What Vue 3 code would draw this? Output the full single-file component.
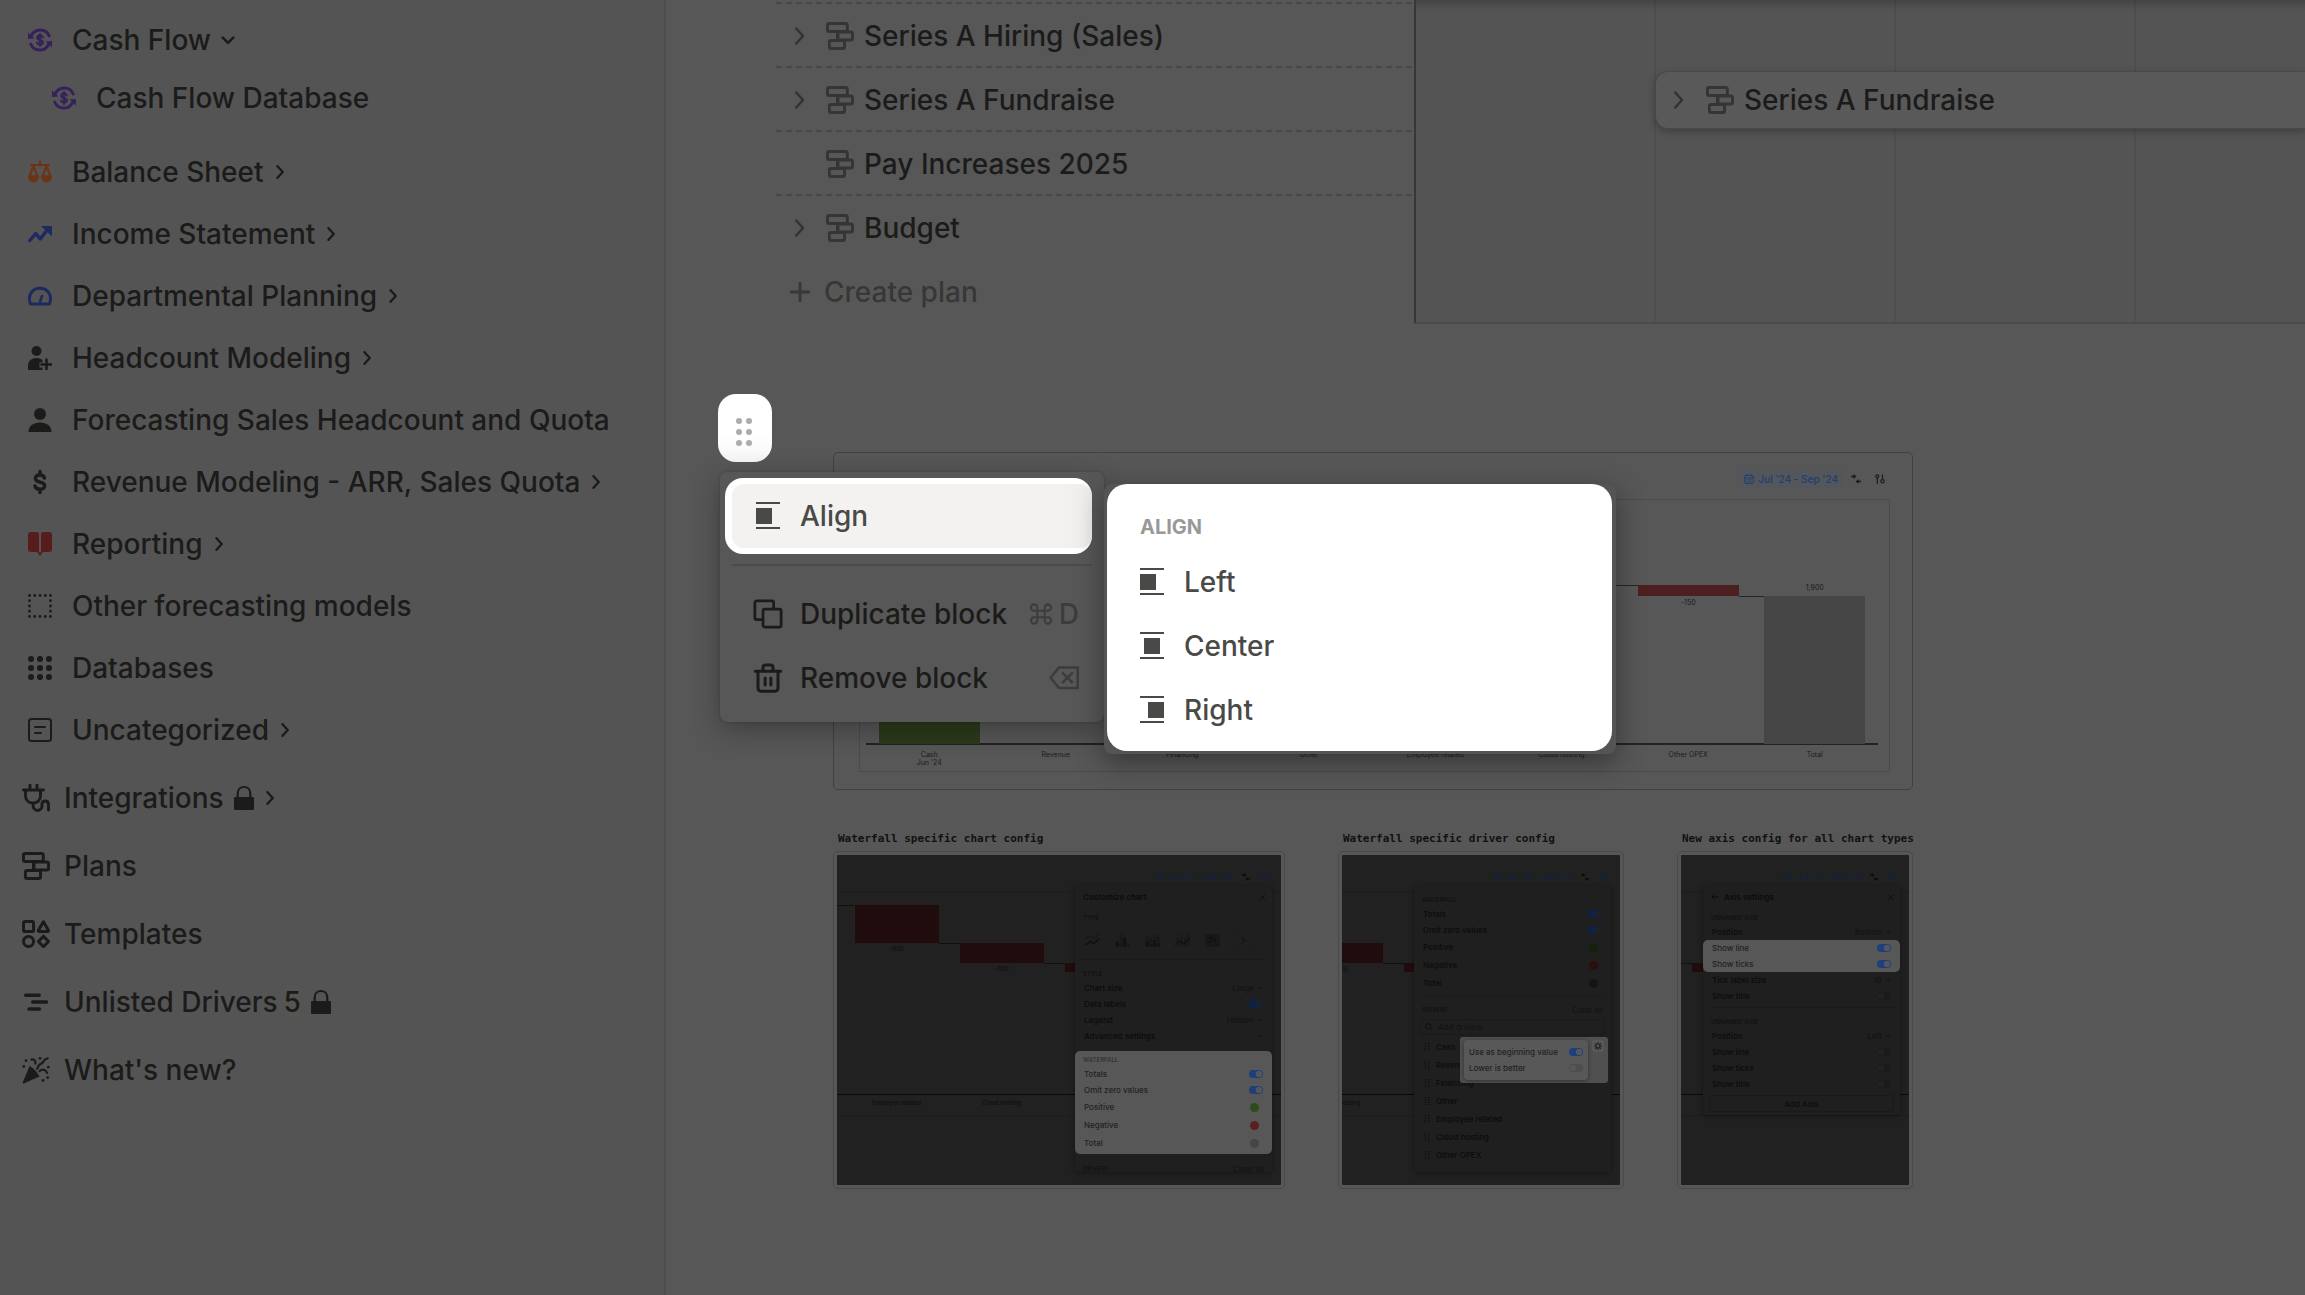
<script setup>
import { h } from 'vue'

const shapes = {
  cash: '<g fill="none" stroke="currentColor" stroke-width="2.900" stroke-linecap="round"><path d="M3 8.500A9.800 9.800 0 0 1 21.300 8"/><path d="M21 15.500A9.800 9.800 0 0 1 2.700 16"/><path d="M14.800 9.300C14.300 8 13.200 7.600 12 7.600c-1.600 0-2.700.8-2.700 2.100 0 3.200 5.500 1.400 5.500 4.600 0 1.300-1.200 2.100-2.800 2.100-1.400 0-2.500-.6-2.900-1.800M12 6v12" stroke-width="2.200"/></g><path fill="currentColor" d="M0 4.500v6.500l6.500-.5zM24 19.500v-6.500l-6.500.5z"/>',
  scale: '<g fill="none" stroke="currentColor" stroke-width="2.200" stroke-linejoin="round" stroke-linecap="round"><path d="M12 1.500v4M3 5h18M5.500 5.500l-4 11h8zM18.500 5.500l-4 11h8z"/></g><path fill="currentColor" d="M0 15.500h11c0 4-2 6.800-5.500 6.800S0 19.500 0 15.500zM13 15.500h11c0 4-2 6.800-5.500 6.800S13 19.500 13 15.500z"/>',
  trend: '<path fill="none" stroke="currentColor" stroke-width="3.400" stroke-linecap="round" stroke-linejoin="round" d="M1.800 18.500l6-7 4.400 5.500L20 7"/><path fill="currentColor" d="M13 4h10a1 1 0 0 1 1 1v9.500z"/>',
  gauge: '<path fill="none" stroke="currentColor" stroke-width="2.900" stroke-linejoin="round" d="M2.600 20A10.500 10.500 0 0 1 1.500 14.500C1.500 8.500 6 4.300 12 4.300s10.500 4.200 10.500 10.200c0 2-.3 3.900-1.100 5.500z"/><path d="M12 18l2-6" stroke="currentColor" stroke-width="2.600" stroke-linecap="round"/>',
  useradd: '<circle cx="8.500" cy="5" r="5" fill="currentColor"/><path fill="currentColor" d="M0 24v-4c0-5 3.500-8 8.500-8 2.500 0 4.500.8 6 2.200v2.300h-3v5h3V24z"/><path d="M18.500 13.500v10M13.500 18.500h10" stroke="currentColor" stroke-width="2.600" stroke-linecap="round"/>',
  user: '<circle cx="12" cy="6" r="6" fill="currentColor"/><path fill="currentColor" d="M.5 24c0-6 4.500-9.500 11.500-9.500S23.500 18 23.500 24z"/>',
  dollar: '<path fill="none" stroke="currentColor" stroke-width="3.400" stroke-linecap="round" d="M16.500 8C16 6 14.200 5 12 5c-2.800 0-4.600 1.300-4.600 3.500 0 5 9.300 2.300 9.300 7.200 0 2.200-2 3.600-4.700 3.600-2.500 0-4.400-1.200-5-3.300M12 1.500v3.500M12 19v3.500"/>',
  book: '<path fill="currentColor" d="M3 0h5.500C10 0 11 .8 11 2v17.500L12 21l1-1.500V2c0-1.200 1-2 2.500-2H21c2 0 3 1 3 3v14c0 2-1 3-3 3h-4c-2 0-3 .5-3.500 2L12 24l-1.500-2C10 20.500 9 20 7 20H3c-2 0-3-1-3-3V3c0-2 1-3 3-3z"/>',
  dotted: '<path fill="none" stroke="currentColor" stroke-width="2.800" stroke-linecap="round" stroke-dasharray=".1 5.150" d="M1.500 1.500h21v21h-21z"/>',
  grid: '<g fill="currentColor"><circle cx="3" cy="3" r="3"/><circle cx="12" cy="3" r="3"/><circle cx="21" cy="3" r="3"/><circle cx="3" cy="12" r="3"/><circle cx="12" cy="12" r="3"/><circle cx="21" cy="12" r="3"/><circle cx="3" cy="21" r="3"/><circle cx="12" cy="21" r="3"/><circle cx="21" cy="21" r="3"/></g>',
  doc: '<g fill="none" stroke="currentColor" stroke-width="2" stroke-linecap="round"><rect x="1" y="1" width="22" height="22" rx="2.500"/><path d="M7 9h10M7 15h6"/></g>',
  plug: '<g fill="none" stroke="currentColor" stroke-width="2.900" stroke-linecap="round" stroke-linejoin="round" transform="scale(.857)"><path d="M8 1v4M15 1v4M1.500 6h20M3.500 6v6c0 4 3 7 7 7h1c4 0 7-3 7-7V6M11 19v2c0 3 2 5.500 4.500 5.500S20 24 20 22.500v-2c0-2 1-3.500 3.200-3.500s3.300 1.500 3.300 4V26"/></g>',
  plans: '<g fill="none" stroke="currentColor" stroke-width="2.500"><rect x="1.250" y="1.250" width="17" height="6.900" rx="1.500"/><rect x="9.800" y="8.550" width="12.950" height="6.900" rx="1.500"/><rect x="2.900" y="15.850" width="13" height="6.900" rx="1.500"/><path d="M10.300 8v8"/></g>',
  templates: '<g fill="none" stroke="currentColor" stroke-width="2.600" stroke-linejoin="round"><rect x="1.300" y="1.300" width="8.600" height="8.600" rx="1.200"/><path d="M18.400 1.500l4.200 7.200c.3.700 0 1.200-.8 1.200h-6.900c-.8 0-1.100-.5-.8-1.200z"/><circle cx="5.600" cy="18.400" r="4.300"/><path d="M18.400 13.900l4.300 4.500-4.300 4.500-4.300-4.500z"/></g>',
  drivers: '<path fill="none" stroke="currentColor" stroke-width="3" stroke-linecap="round" d="M3.200 6.200h11.500M9.200 12h11.800M6 18h9"/>',
  party: '<path fill="currentColor" d="M6.500 8.500c3 1.500 6.500 5 8.500 9L1.500 23.500C.8 23.700.5 23.200.7 22.500z"/><g fill="none" stroke="currentColor" stroke-width="1.900" stroke-linecap="round"><path d="M8 3c2-.5 4 .5 3.500 3.500M13 11c1-3 1.500-4 3.500-4.500S18 2.500 22 2M15 13c2-2 5-2 6.500 1.500"/></g><g fill="currentColor"><circle cx="3.500" cy="4" r="1.200"/><circle cx="15.500" cy="2" r="1.200"/><circle cx="1.500" cy="9" r="1.200"/><circle cx="22.500" cy="9.500" r="1.200"/><circle cx="18" cy="21" r="1.200"/><circle cx="22" cy="18.500" r="1.200"/></g>',
  lock: '<path fill="none" stroke="currentColor" stroke-width="2.200" d="M5.700 12V7.500C5.700 3.500 8.500 1 12 1s6.300 2.500 6.300 6.500V12"/><rect x="2" y="11" width="20" height="13" rx="1" fill="currentColor"/>',
  right: '<path fill="none" stroke="currentColor" stroke-width="3.200" stroke-linecap="round" stroke-linejoin="round" d="M7 2l9 10-9 10"/>',
  next: '<path fill="none" stroke="currentColor" stroke-width="4" stroke-linecap="round" stroke-linejoin="round" d="M6 2l9 10-9 10"/>',
  down: '<path fill="none" stroke="currentColor" stroke-width="4.600" stroke-linecap="round" stroke-linejoin="round" d="M3 8l9 9 9-9"/>',
  plus: '<path fill="none" stroke="currentColor" stroke-width="3.400" stroke-linecap="round" d="M12 1.500v21M1.500 12h21"/>',
  left: '<path fill="currentColor" d="M0 0h24v2H0zM0 6h16v16H0zM0 25h24v2H0z"/>',
  center: '<path fill="currentColor" d="M0 0h24v2H0zM4 6h16v16H4zM0 25h24v2H0z"/>',
  rightalign: '<path fill="currentColor" d="M0 0h24v2H0zM8 6h16v16H8zM0 25h24v2H0z"/>',
  copy: '<g fill="none" stroke="currentColor" stroke-width="2.200" stroke-linejoin="round"><path d="M8 16.500H3A1.500 1.500 0 0 1 1.500 15V3A1.500 1.500 0 0 1 3 1.500h12A1.500 1.500 0 0 1 16.500 3v5"/><rect x="8" y="8" width="14.500" height="14.500" rx="1.500"/></g>',
  trash: '<g fill="none" stroke="currentColor" stroke-width="2.400" stroke-linecap="round" stroke-linejoin="round"><path d="M1.800 6.500h20.400M8 6V3.500C8 2.300 8.800 1.500 10 1.500h4c1.200 0 2 .8 2 2V6M4 7v13c0 1.500 1 2.500 2.500 2.500h11c1.500 0 2.500-1 2.500-2.500V7M9.700 12v5.500M14.300 12v5.500"/></g>',
  command: '<path fill="none" stroke="currentColor" stroke-width="2.200" d="M8 8V5a3.500 3.500 0 1 0-3.500 3.500h15A3.500 3.500 0 1 0 16 5v14a3.500 3.500 0 1 0 3.500-3.500h-15A3.500 3.500 0 1 0 8 19V8z"/>',
  erase: '<path fill="none" stroke="currentColor" stroke-width="2" d="M8 3.500h15v16.500H8L1.300 11.800zM10.500 7.500l8.500 8.500M19 7.500l-8.500 8.500"/>',
  calendar: '<g fill="none" stroke="currentColor" stroke-width="2.400"><rect x="1.500" y="3.500" width="21" height="19" rx="3.500"/><path d="M7 0v5M17 0v5M2 9.500h20"/><path stroke-width="2.600" stroke-dasharray="2.400 2.400" d="M6 14h13M6 18.500h13"/></g>',
  swap: '<path fill="currentColor" d="M0 4h6V0l7 6-7 6V8H0zM24 16h-6v-4l-7 6 7 6v-4h6z"/>',
  filter: '<g fill="none" stroke="currentColor" stroke-width="2.800" stroke-linecap="round"><circle cx="5.500" cy="5.500" r="3.500"/><path d="M5.500 9v13M18 2v11"/><circle cx="18" cy="17.500" r="4"/></g>',
  close: '<path stroke="currentColor" stroke-width="2.600" stroke-linecap="round" d="M4 4l16 16M20 4L4 20"/>',
  arrow: '<path fill="none" stroke="currentColor" stroke-width="2.600" d="M2 12h19M14 5l7 7-7 7"/>',
  back: '<path fill="none" stroke="currentColor" stroke-width="2.600" d="M22 12H3M10 5l-7 7 7 7"/>',
  search: '<path fill="none" stroke="currentColor" stroke-width="2.400" d="M16 16l6.500 6.500M18 10a8 8 0 1 1-16 0 8 8 0 0 1 16 0z"/>',
  gear: '<circle cx="12" cy="12" r="6" fill="none" stroke="currentColor" stroke-width="3.600"/><path fill="none" stroke="currentColor" stroke-width="3.600" d="M12 0v5M12 19v5M0 12h5M19 12h5M3.500 3.500L7 7M17 17l3.500 3.500M20.500 3.500L17 7M7 17l-3.500 3.500"/>',
  grip: '<g fill="currentColor"><circle cx="7" cy="2" r="2"/><circle cx="17" cy="2" r="2"/><circle cx="7" cy="9" r="2"/><circle cx="17" cy="9" r="2"/><circle cx="7" cy="16" r="2"/><circle cx="17" cy="16" r="2"/><circle cx="7" cy="23" r="2"/><circle cx="17" cy="23" r="2"/></g>',
  line: '<g fill="none" stroke="currentColor"><path opacity=".4" stroke-width="2" d="M1 9l7-5 6 4 9-6"/><path stroke-width="3" d="M1 19l8-6 5 4 9-8"/></g>',
  bars: '<g fill="currentColor"><path d="M1 13h5v9H1zM13 7h5v15h-5z"/><path opacity=".4" d="M7 1h5v21H7zM19 17h5v5h-5z"/></g>',
  stacked: '<g fill="currentColor"><path d="M1 13h5v9H1zM7 17h5v5H7zM13 11h5v11h-5zM19 16h5v6h-5z"/><path opacity=".4" d="M1 4h5v8H1zM7 7h5v9H7zM13 1h5v9h-5zM19 3h5v12h-5z"/></g>',
  combo: '<path opacity=".4" fill="currentColor" d="M3 8h3v14H3zM9 2h3v20H9zM15 6h3v16h-3zM20 2h3v20h-3z"/><path fill="none" stroke="currentColor" stroke-width="2.500" d="M0 19l8-6 6 4 10-8"/>'
}
const Icon = (props) =>
  h('svg', { viewBox: props.box || '0 0 24 24', 'aria-hidden': 'true', innerHTML: shapes[props.name] })
Icon.props = ['name', 'box']

const pages = [
  { label: 'Cash Flow', icon: 'cash', tone: 'purple', caret: 'down' },
  { label: 'Cash Flow Database', icon: 'cash', tone: 'purple', child: true },
  { label: 'Balance Sheet', icon: 'scale', tone: 'orange', caret: 'next' },
  { label: 'Income Statement', icon: 'trend', tone: 'blue', caret: 'next' },
  { label: 'Departmental Planning', icon: 'gauge', tone: 'blue', caret: 'next' },
  { label: 'Headcount Modeling', icon: 'useradd', caret: 'next' },
  { label: 'Forecasting Sales Headcount and Quota', icon: 'user' },
  { label: 'Revenue Modeling - ARR, Sales Quota', icon: 'dollar', caret: 'next' },
  { label: 'Reporting', icon: 'book', tone: 'red', caret: 'next' },
  { label: 'Other forecasting models', icon: 'dotted' },
  { label: 'Databases', icon: 'grid' },
  { label: 'Uncategorized', icon: 'doc', caret: 'next' }
]
const tools = [
  { label: 'Integrations', icon: 'plug', lock: true, caret: 'next' },
  { label: 'Plans', icon: 'plans' },
  { label: 'Templates', icon: 'templates' },
  { label: 'Unlisted Drivers', icon: 'drivers', count: 5, lock: true },
  { label: "What's new?", icon: 'party' }
]
const plans = [
  { label: 'Series A Hiring (Sales)', open: true },
  { label: 'Series A Fundraise', open: true },
  { label: 'Pay Increases 2025', open: false },
  { label: 'Budget', open: true }
]
const aligns = [
  { label: 'Left', icon: 'left' },
  { label: 'Center', icon: 'center' },
  { label: 'Right', icon: 'rightalign' }
]

// Bars are measured in pixels from the top of the plot area.
const columns = [
  { label: 'Cash', sub: "Jun '24", top: 144, size: 100, kind: 'up' },
  { label: 'Revenue' },
  { label: 'Financing' },
  { label: 'Other' },
  { label: 'Employee related' },
  { label: 'Cloud hosting', link: 85 },
  { label: 'Other OPEX', top: 85, size: 11, kind: 'down', value: '-150', valueTop: 98, link: 96 },
  { label: 'Total', top: 96, size: 148, kind: 'total', value: '1,900', valueTop: 83 }
]
const steps = [
  { label: 'Employee related', top: 12, size: 38, value: '-600', link: 50 },
  { label: 'Cloud hosting', top: 50, size: 20, value: '-300', link: 70 },
  { label: 'Other OPEX', top: 70, size: 9 }
]
const shots = [
  { id: 'chart', title: 'Waterfall specific chart config', shift: 7, steps },
  { id: 'driver', title: 'Waterfall specific driver config', shift: -54, steps: steps.slice(1) },
  { id: 'axis', title: 'New axis config for all chart types', shift: -105, steps: steps.slice(1) }
]
const types = ['line', 'bars', 'stacked', 'combo']
const swatches = [
  { label: 'Positive', kind: 'up' },
  { label: 'Negative', kind: 'down' },
  { label: 'Total', kind: 'total' }
]
const drivers = ['Cash', 'Revenue', 'Financing', 'Other', 'Employee related', 'Cloud hosting', 'Other OPEX']
</script>

<template>
  <div class="app">
    <nav class="sidebar" aria-label="Pages">
      <a v-for="p in pages" :key="p.label" href="#" class="page" :class="{ child: p.child }">
        <Icon :name="p.icon" class="page-icon" :class="p.tone" />
        <span>{{ p.label }}</span>
        <Icon v-if="p.caret" :name="p.caret" class="caret" />
      </a>
      <a v-for="t in tools" :key="t.label" href="#" class="tool">
        <Icon :name="t.icon" class="tool-icon" />
        <span>{{ t.label }}</span>
        <span v-if="t.count" class="count">{{ t.count }}</span>
        <Icon v-if="t.lock" name="lock" class="lock" />
        <Icon v-if="t.caret" :name="t.caret" class="caret" />
      </a>
    </nav>

    <main class="main">
      <section class="plans">
        <div class="plan-list">
          <div v-for="p in plans" :key="p.label" class="plan">
            <button class="toggle-row" :aria-label="'Expand ' + p.label">
              <Icon v-if="p.open" name="right" class="chev" />
            </button>
            <Icon name="plans" class="plan-icon" />
            <span>{{ p.label }}</span>
          </div>
          <button class="create"><Icon name="plus" class="plus" /><span>Create plan</span></button>
        </div>
        <div class="timeline">
          <div class="span">
            <Icon name="right" class="chev" />
            <Icon name="plans" class="plan-icon" />
            <span>Series A Fundraise</span>
          </div>
        </div>
      </section>

      <section class="block">
        <article class="chart-card">
          <header class="chart-tools">
            <button class="range"><Icon name="calendar" class="mini" />Jul '24 - Sep '24</button>
            <Icon name="swap" class="mini" />
            <Icon name="filter" class="mini" />
          </header>
          <div class="frame">
            <div class="plot">
              <div v-for="c in columns" :key="c.label" class="col">
                <i v-if="c.size" class="bar" :class="c.kind" :style="{ top: c.top + 'px', height: c.size + 'px' }"></i>
                <i v-if="c.link" class="link" :style="{ top: c.link + 'px' }"></i>
                <span v-if="c.value" class="value" :style="{ top: c.valueTop + 'px' }">{{ c.value }}</span>
              </div>
            </div>
            <div class="labels">
              <span v-for="c in columns" :key="c.label">{{ c.label }}<br v-if="c.sub" />{{ c.sub }}</span>
            </div>
          </div>
        </article>

        <div class="shots">
          <figure v-for="s in shots" :key="s.id" class="shot">
            <figcaption>{{ s.title }}</figcaption>
            <div class="shot-card">
              <div class="view">
                <div class="view-tools">
                  <span class="view-range"><Icon name="calendar" class="tiny" />Jul '24 - Sep '24</span>
                  <Icon name="swap" class="tiny" />
                  <Icon name="filter" class="tiny navy" />
                </div>
                <div class="mini-chart">
                  <div class="mini-plot">
                    <div v-for="(c, i) in s.steps" :key="c.label" class="mini-col" :style="i ? null : { marginLeft: s.shift + 'px' }">
                      <i v-if="i === 0 && s.id === 'chart'" class="lead"></i>
                      <i class="bar dim" :style="{ top: c.top + 'px', height: c.size + 'px' }"></i>
                      <i v-if="c.link" class="link dim" :style="{ top: c.link + 'px' }"></i>
                      <template v-if="c.value && s.id !== 'axis'">
                        <span class="value" :style="{ top: c.top + c.size + 1 + 'px' }">{{ c.value }}</span>
                        <span class="mini-label">{{ c.label }}</span>
                      </template>
                    </div>
                  </div>
                </div>

                <aside v-if="s.id === 'chart'" class="panel tall">
                  <header><b>Customize chart</b><Icon name="close" class="x" /></header>
                  <h4 class="first">Type</h4>
                  <div class="types">
                    <Icon v-for="t in types" :key="t" :name="t" class="type" />
                    <span class="kpi">7<small>↑</small></span>
                    <button class="more" aria-label="More types"><Icon name="right" class="x" /></button>
                  </div>
                  <hr />
                  <h4>Style</h4>
                  <div class="row"><span>Chart size</span><em>Large<Icon name="arrow" class="go" /></em></div>
                  <label class="row"><span>Data labels</span><input type="checkbox" checked /></label>
                  <div class="row"><span>Legend</span><em>Hidden<Icon name="arrow" class="go" /></em></div>
                  <div class="row"><span>Advanced settings</span><em><Icon name="arrow" class="go" /></em></div>
                  <div class="lit water">
                    <h4>Waterfall</h4>
                    <label class="row"><span>Totals</span><input type="checkbox" checked /></label>
                    <label class="row"><span>Omit zero values</span><input type="checkbox" checked /></label>
                    <div v-for="w in swatches" :key="w.label" class="row wide"><span>{{ w.label }}</span><i class="dot" :class="w.kind"></i></div>
                  </div>
                  <div class="heading low"><h4>Drivers</h4><em>Clear all</em></div>
                </aside>

                <aside v-else-if="s.id === 'driver'" class="panel tall">
                  <h4>Waterfall</h4>
                  <label class="row"><span>Totals</span><input type="checkbox" checked /></label>
                  <label class="row"><span>Omit zero values</span><input type="checkbox" checked /></label>
                  <div v-for="w in swatches" :key="w.label" class="row wide"><span>{{ w.label }}</span><i class="dot" :class="w.kind"></i></div>
                  <hr />
                  <div class="heading"><h4>Drivers</h4><em>Clear all</em></div>
                  <label class="search"><Icon name="search" class="tiny" /><input type="text" placeholder="Add drivers" aria-label="Add drivers" /></label>
                  <div v-for="d in drivers" :key="d" class="row wide driver"><Icon name="grip" class="tiny" /><span>{{ d }}</span></div>
                  <div class="lit pop-area">
                    <div class="pop">
                      <label class="row"><span>Use as beginning value</span><input type="checkbox" checked /></label>
                      <label class="row"><span>Lower is better</span><input type="checkbox" /></label>
                    </div>
                    <button class="gear" aria-label="Driver settings"><Icon name="gear" class="tiny" /></button>
                  </div>
                </aside>

                <aside v-else class="panel">
                  <header><Icon name="back" class="tiny" /><b>Axis settings</b><Icon name="close" class="x" /></header>
                  <h4 class="first">Unnamed axis</h4>
                  <div class="row"><span>Position</span><em>Bottom<Icon name="arrow" class="go" /></em></div>
                  <div class="lit">
                    <label class="row"><span>Show line</span><input type="checkbox" checked /></label>
                    <label class="row"><span>Show ticks</span><input type="checkbox" checked /></label>
                  </div>
                  <div class="row"><span>Tick label size</span><em>10<Icon name="arrow" class="go" /></em></div>
                  <label class="row"><span>Show title</span><input type="checkbox" /></label>
                  <hr />
                  <h4>Unnamed axis</h4>
                  <div class="row"><span>Position</span><em>Left<Icon name="arrow" class="go" /></em></div>
                  <label class="row"><span>Show line</span><input type="checkbox" /></label>
                  <label class="row"><span>Show ticks</span><input type="checkbox" /></label>
                  <label class="row"><span>Show title</span><input type="checkbox" /></label>
                  <button class="add">Add Axis</button>
                </aside>
              </div>
            </div>
          </figure>
        </div>

        <button class="handle" aria-label="Block menu">
          <i v-for="n in 6" :key="n"></i>
        </button>
        <div class="menu" role="menu">
          <div class="spot">
            <button class="item active" role="menuitem"><Icon name="left" box="0 0 24 28" class="align-icon" /><span>Align</span></button>
          </div>
          <div class="divider"></div>
          <button class="item" role="menuitem">
            <Icon name="copy" class="item-icon" /><span>Duplicate block</span>
            <span class="keys"><Icon name="command" class="key" />D</span>
          </button>
          <button class="item" role="menuitem">
            <Icon name="trash" class="item-icon" /><span>Remove block</span>
            <span class="keys"><Icon name="erase" class="erase" /></span>
          </button>
        </div>
        <div class="submenu" role="menu">
          <div class="sheet">
            <h3>Align</h3>
            <button v-for="a in aligns" :key="a.label" class="option" role="menuitem">
              <Icon :name="a.icon" box="0 0 24 28" class="option-icon" /><span>{{ a.label }}</span>
            </button>
          </div>
        </div>
      </section>
    </main>
  </div>
</template>

<style>
body {
  margin: 0;
  background: #575757;
}
</style>

<style scoped>
* {
  box-sizing: border-box;
}
.app {
  display: flex;
  min-height: 100vh;
  overflow: hidden;
  background: #575757;
  color: #1b1b1a;
  font: 500 28px/36px Inter, "Liberation Sans", sans-serif;
}
button {
  border: 0;
  padding: 0;
  background: none;
  color: inherit;
  font: inherit;
  text-align: left;
}
svg {
  flex: none;
  display: block;
}

/* Sidebar */
.sidebar {
  flex: 0 0 666px;
  padding-top: 9px;
  background: #545454;
  border-right: 2px solid #4d4d4d;
}
.page,
.tool {
  display: flex;
  align-items: center;
  height: 62px;
  padding-left: 28px;
  color: inherit;
  text-decoration: none;
  white-space: nowrap;
}
.page-icon {
  width: 24px;
  height: 24px;
  margin-right: 20px;
}
.page.child {
  height: 54px;
  padding-left: 52px;
  margin-bottom: 16px;
}
.tool {
  height: 68px;
  padding-left: 22px;
}
.page + .tool {
  margin-top: 3px;
}
.tool-icon {
  width: 28px;
  height: 28px;
  margin-right: 14px;
}
.caret {
  width: 14px;
  height: 14px;
  margin-left: 10px;
}
.lock {
  width: 24px;
  height: 26px;
  margin-left: 8px;
}
.lock + .caret {
  margin-left: 8px;
}
.count {
  margin-left: 6px;
  border-radius: 8px;
  background: #555552;
}
.purple { color: #35215c; }
.orange { color: #6b3416; }
.blue { color: #1d2a5f; }
.red { color: #571d1d; }

/* Plans table */
.main {
  flex: 1;
  min-width: 0;
}
.plans {
  display: grid;
  grid-template-columns: 638px 1fr;
  height: 324px;
  padding-left: 110px;
}
.plan-list {
  padding-top: 2px;
  overflow: hidden;
}
.plan,
.create {
  display: flex;
  align-items: center;
  width: 100%;
  height: 64px;
  padding-top: 4px;
}
.plan {
  background: repeating-linear-gradient(90deg, #484848 0 6px, transparent 6px 10px) 0 0 / 100% 2px no-repeat;
}
.toggle-row {
  width: 50px;
  padding-left: 15px;
}
.chev {
  width: 18px;
  height: 22px;
  color: #323231;
}
.plan-icon {
  width: 28px;
  height: 28px;
  margin-right: 10px;
  color: #353533;
}
.create {
  color: #373736;
}
.plus {
  width: 20px;
  height: 20px;
  margin: 0 14px;
}
.timeline {
  padding: 72px 0 0 240px;
  border-left: 2px solid #373737;
  border-bottom: 2px solid #4b4b4b;
  background:
    linear-gradient(rgba(0, 0, 0, 0.2), transparent) 0 0 / 100% 10px no-repeat,
    repeating-linear-gradient(90deg, transparent 0 238px, #4e4e4e 238px 240px),
    #545454;
}
.span {
  display: flex;
  align-items: center;
  height: 56px;
  padding-left: 14px;
  border-radius: 12px 0 0 12px;
  background: #595959;
  box-shadow: 0 0 0 1px #494949, 0 3px 8px rgba(0, 0, 0, 0.3);
}
.span .chev {
  margin-right: 18px;
}

/* Chart block */
.block {
  position: relative;
  width: 1080px;
  margin: 128px 0 0 167px;
}
.chart-card {
  height: 338px;
  border: 1px solid #414141;
  border-radius: 5px;
}
.chart-tools {
  display: flex;
  align-items: center;
  justify-content: flex-end;
  gap: 14px;
  height: 46px;
  padding: 6px 27px 0 0;
  font-size: 10px;
  line-height: 18px;
}
.range {
  display: flex;
  align-items: center;
  gap: 5px;
  padding: 0 5px 0 7px;
  margin-right: -6px;
  border-radius: 3px;
  background: #53565a;
  color: #213f72;
}
.mini {
  width: 10px;
  height: 10px;
}
.frame {
  height: 273px;
  margin: 0 22px 0 25px;
  padding: 0 11px 0 6px;
  border: 1px solid #4b4b4b;
}
.plot {
  display: grid;
  grid-template-columns: repeat(8, 1fr);
  height: 245px;
  border-bottom: 2px solid #232323;
}
.col {
  position: relative;
}
.bar {
  position: absolute;
  left: 10%;
  width: 80%;
}
.up { background: #2c3a1b; }
.down { background: #4c2020; }
.total { background: #454545; }
.link {
  position: absolute;
  left: 90%;
  width: 20%;
  height: 1px;
  background: #262626;
}
.value {
  position: absolute;
  left: 0;
  right: 0;
  text-align: center;
  font: 400 7px/10px Inter, sans-serif;
}
.labels {
  display: grid;
  grid-template-columns: repeat(8, 1fr);
  padding-top: 6px;
  text-align: center;
  font: 400 7px/8px Inter, sans-serif;
}

/* Captured settings panels */
.shots {
  display: grid;
  grid-template-columns: 452fr 286fr 236fr;
  gap: 53px;
  margin-top: 39px;
}
.shot {
  margin: 0;
  min-width: 0;
}
figcaption {
  height: 22px;
  padding-left: 5px;
  color: #111;
  font: 700 11px/20px "DejaVu Sans Mono", "Liberation Mono", monospace;
  white-space: nowrap;
}
.shot-card {
  padding: 3px;
  border: 1px solid #4a4a4a;
  border-radius: 5px;
}
.view {
  position: relative;
  height: 330px;
  overflow: hidden;
  border-radius: 1px;
  background: #212121;
  color: #0b0b0b;
  font-size: 8px;
  line-height: 12px;
}
.view-tools {
  display: flex;
  align-items: center;
  justify-content: flex-end;
  gap: 10px;
  height: 37px;
  padding: 6px 13px 0 0;
}
.view-range {
  display: flex;
  align-items: center;
  gap: 5px;
  color: #13233f;
}
.tiny {
  width: 8px;
  height: 8px;
}
.navy {
  color: #13233f;
}
.mini-chart {
  height: 224px;
  border: solid #1c1c1c;
  border-width: 1px 0;
}
.mini-plot {
  display: flex;
  height: 202px;
  border-bottom: 1px solid #0a0a0a;
}
.mini-col {
  position: relative;
  flex: 0 0 105px;
}
.dim.bar {
  background: #200c0c;
}
.dim.link,
.lead {
  background: #101010;
}
.lead {
  position: absolute;
  top: 12px;
  left: -10px;
  width: 20px;
  height: 1px;
}
.mini-label {
  position: absolute;
  top: 204px;
  left: 0;
  right: 0;
  text-align: center;
  font: 400 6px/12px Inter, sans-serif;
}
.mini-col .value {
  font-size: 6px;
}
.panel {
  position: absolute;
  top: 31px;
  right: 9px;
  width: 197px;
  height: 229px;
  overflow: hidden;
  border-radius: 3px;
  background: #1f1f1f;
  box-shadow: 0 1px 5px rgba(0, 0, 0, 0.4);
}
.panel.tall {
  height: 286px;
}
.panel header {
  display: flex;
  align-items: center;
  gap: 5px;
  height: 22px;
  padding: 0 6px 0 8px;
}
.panel b {
  flex: 1;
  font-weight: 600;
}
.x {
  width: 7px;
  height: 7px;
}
h4 {
  height: 13px;
  margin: 7px 0 0 8px;
  color: #121212;
  font: 600 6px/13px Inter, sans-serif;
  text-transform: uppercase;
}
h4.first {
  margin-top: 3px;
}
.panel hr {
  height: 1px;
  margin: 3px 5px 0;
  border: 0;
  background: #1b1b1b;
}
.row {
  display: flex;
  align-items: center;
  justify-content: space-between;
  height: 16px;
  padding: 0 9px;
}
.row.wide {
  height: 18px;
}
.row em,
.heading em {
  display: flex;
  align-items: center;
  gap: 3px;
  color: #141414;
  font-style: normal;
}
.go {
  width: 6px;
  height: 6px;
}
.row input {
  appearance: none;
  width: 14px;
  height: 8px;
  margin: 0;
  border-radius: 4px;
  background: radial-gradient(circle at 4px 4px, #212121 3px, transparent 3px) #1b1b1b;
}
.row input:checked {
  background: radial-gradient(circle at 10px 4px, #212121 3px, transparent 3px) #0e2146;
}
.dot {
  width: 9px;
  height: 9px;
  margin-right: 4px;
  border-radius: 50%;
}
.panel > .row .up { background: #14200b; }
.panel > .row .down { background: #2b0e0e; }
.panel > .row .total { background: #151515; }
.types {
  display: flex;
  align-items: center;
  gap: 15px;
  height: 32px;
  padding: 0 10px;
}
.type {
  width: 15px;
  height: 15px;
  color: #121212;
}
.kpi {
  width: 15px;
  border-radius: 1px;
  background: #181818;
  text-align: center;
}
.kpi small {
  font-size: 6px;
}
.more {
  display: grid;
  place-items: center;
  width: 16px;
  height: 15px;
  border-radius: 3px;
  box-shadow: 0 0 1px #141414;
}
.lit {
  border-radius: 5px;
  background: #575757;
  color: #222;
}
.lit h4 {
  margin-top: 0;
  color: #353535;
}
.lit .row input {
  background: radial-gradient(circle at 4px 4px, #575757 3px, transparent 3px) #4e4e4e;
}
.lit .row input:checked {
  background: radial-gradient(circle at 10px 4px, #575757 3px, transparent 3px) #1f3e7c;
}
.lit .up { background: #304a1c; }
.lit .down { background: #5a2020; }
.water {
  margin-top: 7px;
  padding: 2px 0;
}
.heading {
  display: flex;
  align-items: center;
  justify-content: space-between;
  height: 13px;
  margin-top: 7px;
  padding-right: 8px;
}
.heading h4 {
  margin-top: 0;
}
.heading.low {
  margin-top: 8px;
}
.search {
  display: flex;
  align-items: center;
  gap: 5px;
  height: 16px;
  margin: 3px 6px;
  padding-left: 4px;
  border: 1px solid #1a1a1a;
  border-radius: 3px;
}
.search input {
  width: 120px;
  border: 0;
  padding: 0;
  background: none;
  font: inherit;
}
.search input::placeholder {
  color: #131313;
}
.row.driver {
  justify-content: flex-start;
  gap: 5px;
}
.pop-area {
  position: absolute;
  top: 151px;
  right: 3px;
  display: flex;
  gap: 4px;
  width: 148px;
  height: 46px;
  padding: 3px 4px;
  border-radius: 3px;
  background: #505050;
}
.pop {
  flex: 1;
  padding: 4px 0;
  border-radius: 4px;
  background: #585858;
  box-shadow: 0 1px 4px rgba(0, 0, 0, 0.4);
}
.pop .row {
  padding: 0 5px;
  white-space: nowrap;
}
.gear {
  display: grid;
  place-items: center;
  width: 12px;
  height: 12px;
  border-radius: 2px;
  background: #585858;
}
.add {
  display: block;
  width: 185px;
  height: 17px;
  margin: 3px auto 0;
  border: 1px solid #1a1a1a;
  border-radius: 3px;
  text-align: center;
}

/* Block menu */
.handle {
  position: absolute;
  top: -58px;
  left: -115px;
  display: grid;
  grid-template-columns: 6px 6px;
  gap: 5px 4px;
  place-content: center;
  width: 54px;
  height: 68px;
  padding-top: 8px;
  padding-right: 2px;
  border-radius: 18px;
  background: linear-gradient(#fff 60%, #f6f6f6);
}
.handle i {
  width: 6px;
  height: 6px;
  border-radius: 50%;
  background: #acacac;
}
.menu {
  position: absolute;
  top: 20px;
  left: -113px;
  width: 384px;
  padding: 12px;
  border-radius: 8px;
  background: #575757;
  box-shadow: 0 0 0 2px rgba(0, 0, 0, 0.05), 0 8px 28px rgba(0, 0, 0, 0.3);
}
.spot {
  margin: -6px 0 -6px -7px;
  padding: 6px 0 6px 7px;
  overflow: hidden;
  border-radius: 18px;
  background: #fff;
}
.item {
  display: flex;
  align-items: center;
  width: 100%;
  height: 64px;
  padding: 0 13px 0 20px;
  white-space: nowrap;
}
.item.active {
  border-radius: 12px;
  background: linear-gradient(90deg, #f3f2f1 90%, #eeedec);
  color: #494947;
}
.item-icon {
  width: 32px;
  height: 30px;
  margin-right: 16px;
}
.align-icon {
  width: 24px;
  height: 28px;
  margin: 0 20px 0 4px;
}
.divider {
  height: 2px;
  margin: 16px 0;
  background: #4c4c4c;
}
.keys {
  display: flex;
  align-items: center;
  gap: 7px;
  margin-left: auto;
  color: #3c3c3b;
}
.key {
  width: 22px;
  height: 22px;
}
.erase {
  width: 30px;
  height: 30px;
}
.submenu {
  position: absolute;
  top: 32px;
  left: 271px;
  width: 512px;
  padding: 0 4px 3px 3px;
  border-radius: 8px;
  background: #545454;
  box-shadow: 0 8px 28px rgba(0, 0, 0, 0.4);
}
.sheet {
  padding-bottom: 9px;
  border-radius: 20px;
  background: #fff;
  color: #494947;
}
h3 {
  height: 66px;
  margin: 0;
  padding: 29px 0 0 33px;
  color: #999997;
  font: 700 20px/28px Inter, sans-serif;
  text-transform: uppercase;
}
.option {
  display: flex;
  align-items: center;
  gap: 20px;
  width: 100%;
  height: 64px;
  padding-left: 33px;
}
.option-icon {
  width: 24px;
  height: 28px;
}
</style>
